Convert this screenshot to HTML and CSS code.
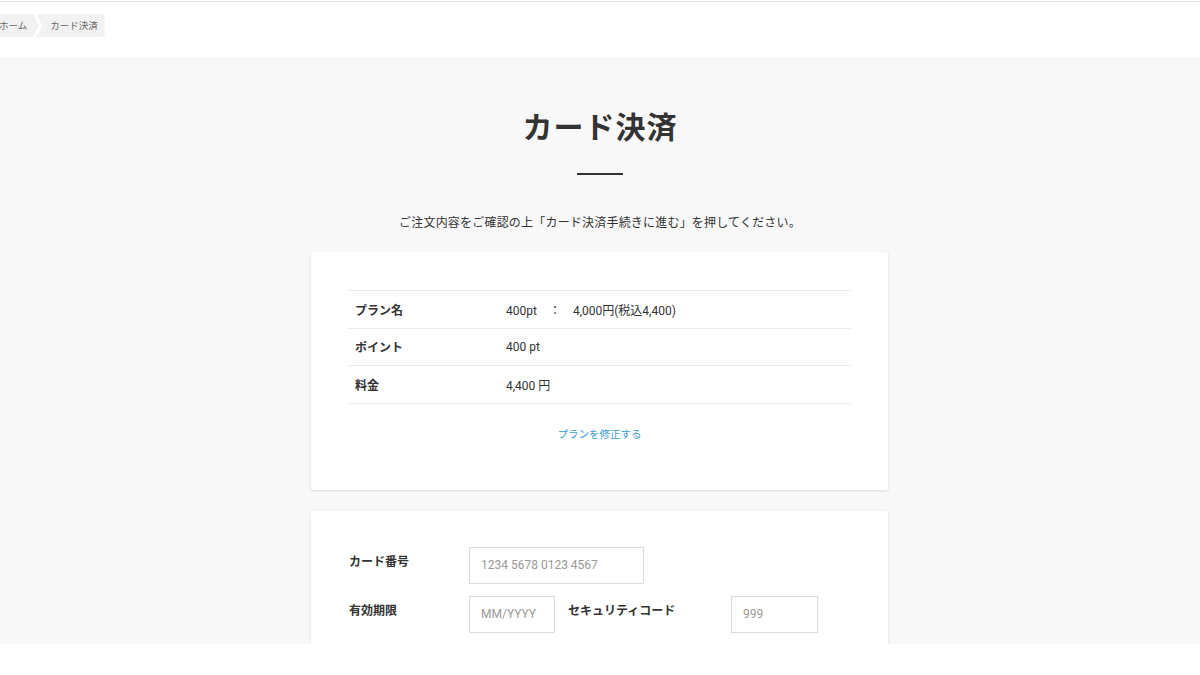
FILE: index.html
```html
<!DOCTYPE html>
<html lang="ja">
<head>
<meta charset="utf-8">
<title>カード決済</title>
<link rel="stylesheet" href="styles.css">
</head>
<body>
<div class="page">
  <header class="topbar">
    <nav class="breadcrumb">
      <span class="crumb crumb-first">ホーム</span>
      <span class="crumb crumb-last">カード決済</span>
    </nav>
  </header>
  <main class="main">
    <h1 class="title">カード決済</h1>
    <div class="title-rule"></div>
    <p class="lead">ご注文内容をご確認の上「カード決済手続きに進む」を押してください。</p>

    <section class="card card-plan">
      <table class="plan-table">
        <tr><th>プラン名</th><td>400pt　：　4,000円(税込4,400)</td></tr>
        <tr><th>ポイント</th><td>400 pt</td></tr>
        <tr><th>料金</th><td>4,400 円</td></tr>
      </table>
      <a class="edit-link" href="#">プランを修正する</a>
    </section>

    <section class="card card-form">
      <div class="form-row">
        <label class="form-label">カード番号</label>
        <input class="input input-card" type="text" placeholder="1234 5678 0123 4567">
      </div>
      <div class="form-row">
        <label class="form-label">有効期限</label>
        <input class="input input-exp" type="text" placeholder="MM/YYYY">
        <label class="form-label form-label-sec">セキュリティコード</label>
        <input class="input input-cvc" type="text" placeholder="999">
      </div>
    </section>
  </main>
</div>
</body>
</html>
```

FILE: styles.css
```css
* { box-sizing: border-box; }
html, body { margin: 0; padding: 0; background: #fff; }
body {
  font-family: "Roboto", "Noto Sans CJK JP", sans-serif;
  color: #333;
}
.page {
  height: 644px;
  overflow: hidden;
  border-top: 1px solid #fff;
}
.topbar {
  height: 56px;
  border-top: 1px solid #e6e6e6;
  padding-top: 12px;
  background: #fff;
  overflow: hidden;
}
.breadcrumb {
  display: flex;
  margin-left: -13px;
}
.crumb {
  display: flex;
  align-items: center;
  height: 23px;
  background: #f2f2f2;
  color: #666;
  font-size: 9.5px;
  line-height: 1;
  font-family: "Noto Sans CJK JP", sans-serif;
}
.crumb-first {
  padding: 0 12px 0 12px;
  clip-path: polygon(0 0, calc(100% - 6px) 0, 100% 50%, calc(100% - 6px) 100%, 0 100%);
}
.crumb-last {
  margin-left: -3px;
  padding: 0 7px 0 14px;
  clip-path: polygon(0 0, 100% 0, 100% 100%, 0 100%, 6px 50%);
  border-radius: 0 3px 3px 0;
}
.main {
  background: #f8f8f8;
  height: 590px;
  display: flex;
  flex-direction: column;
  align-items: center;
  padding-top: 46px;
}
.main > * { flex-shrink: 0; }
.title {
  margin: 0;
  font-family: "Noto Sans CJK JP", sans-serif;
  font-size: 30px;
  font-weight: 700;
  line-height: 44px;
  color: #333;
  letter-spacing: 1px;
}
.title-rule {
  width: 46px;
  height: 2px;
  background: #333;
  margin-top: 26px;
}
.lead {
  margin: 37px 0 0;
  font-family: "Noto Sans CJK JP", sans-serif;
  font-size: 12px;
  line-height: 20px;
  color: #333;
  letter-spacing: 0.2px;
}
.card {
  width: 577px;
  margin-right: 1px;
  background: #fff;
  box-shadow: 0 1px 3px rgba(0,0,0,0.12);
  border-radius: 2px;
}
.card-plan {
  margin-top: 20px;
  padding: 38px 37px 48px;
  display: flex;
  flex-direction: column;
  align-items: center;
}
.plan-table {
  width: 100%;
  border-collapse: collapse;
  font-size: 12px;
}
.plan-table tr {
  border-top: 1px solid #ececec;
  border-bottom: 1px solid #ececec;
}
.plan-table th, .plan-table td {
  height: 37.5px;
  padding: 0;
  text-align: left;
  vertical-align: middle;
}
.plan-table th {
  width: 158px;
  padding-left: 7px;
  font-family: "Noto Sans CJK JP", sans-serif;
  font-weight: 700;
  color: #333;
}
.plan-table td {
  color: #333;
  font-family: "Roboto", "Noto Sans CJK JP", sans-serif;
}
.edit-link {
  margin-top: 22px;
  font-family: "Noto Sans CJK JP", sans-serif;
  font-size: 10.5px;
  color: #3b9ed8;
  text-decoration: none;
  line-height: 16px;
}
.card-form {
  margin-top: 21px;
  padding: 36px 37px 40px 38px;
  display: flex;
  flex-direction: column;
  gap: 12px;
}
.form-row {
  display: flex;
  align-items: flex-start;
}
.form-label {
  width: 120px;
  padding-top: 6px;
  font-family: "Noto Sans CJK JP", sans-serif;
  font-size: 12px;
  font-weight: 700;
  line-height: 16px;
  color: #333;
}
.form-label-sec {
  width: 163px;
  margin-left: 13px;
}
.input {
  height: 37px;
  border: 1px solid #dcdcdc;
  border-radius: 0;
  background: #fff;
  padding: 0 11px;
  font-family: "Roboto", sans-serif;
  font-size: 12px;
  color: #333;
  outline: none;
}
.input::placeholder { color: #999; }
.input-card { width: 175px; }
.input-exp { width: 86px; }
.input-cvc { width: 87px; }
```
